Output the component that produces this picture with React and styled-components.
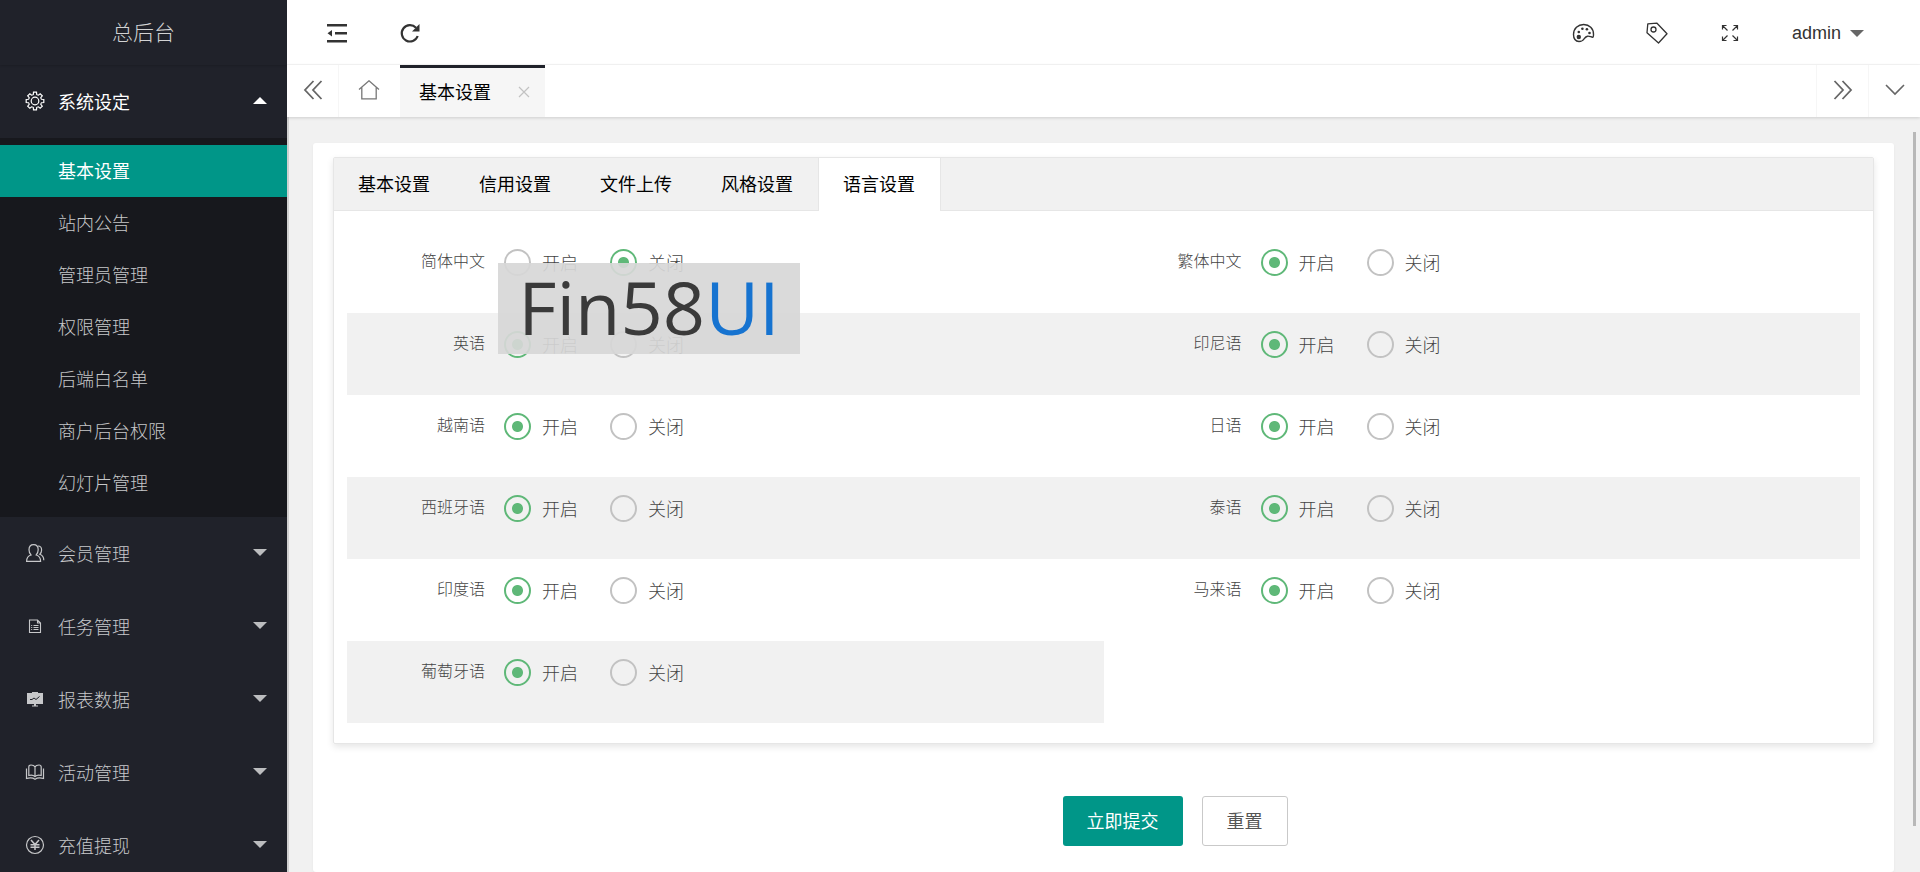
import React, { useState } from "react";
import styled, { createGlobalStyle, css } from "styled-components";

const GlobalStyle = createGlobalStyle`
  * {
    box-sizing: border-box;
  }

  body {
    margin: 0;
    background: #f1f1f1;
    font-family: "Liberation Sans", "Noto Sans CJK SC", sans-serif;
    font-size: 18px;
    font-weight: 300;
    color: #333;
  }

  button {
    font: inherit;
    cursor: pointer;
  }

  a {
    color: inherit;
    text-decoration: none;
  }
`;

const GearIcon = () => {
  const teeth = [0, 45, 90, 135, 180, 225, 270, 315];
  return (
    <svg width="20" height="20" viewBox="0 0 20 20" fill="none" stroke="currentColor" strokeWidth="1.2">
      <circle cx="10" cy="10" r="3.8" />
      {teeth.map((deg) => (
        <path
          key={deg}
          transform={`rotate(${deg} 10 10)`}
          d="M7.500 4 8.300 3.500 8.500 1.200H11.500L11.700 3.500 12.500 4"
        />
      ))}
    </svg>
  );
};

const UsersIcon = () => (
  <svg width="20" height="20" viewBox="0 0 20 20" fill="none" stroke="currentColor" strokeWidth="1.2">
    <path d="M1.6 18.4C1.6 14.6 3.2 12.8 6 12 4.6 10.6 4 9 4 6.8 4 3.6 5.8 1.6 8.6 1.6s4.6 2 4.6 5.2c0 2.2-.8 3.8-2 5.2 2.8.8 4.4 2.6 4.4 6.4Z" />
    <path d="M13 3c2.400 0 3.600 1.600 3.600 4 0 1.800-.6 3.200-1.800 4.200 2.600 1 4 2.800 4 6" />
  </svg>
);

const DocIcon = () => (
  <svg width="20" height="20" viewBox="0 0 20 20" fill="none" stroke="currentColor" strokeWidth="1.1">
    <path d="M4.500 4h8l3 3v9.500h-11ZM12.500 4v3h3" />
    <path d="M8.500 9.500h5M8.500 11.500h5M8.500 13.500h5M6.200 9.500h1M6.200 11.500h1M6.200 13.500h1" />
  </svg>
);

const BoardIcon = () => (
  <svg width="20" height="20" viewBox="0 0 20 20">
    <path fill="currentColor" d="M7 3h6v1h5v11h-7v1.500h2v1H7v-1h2V15H2V4h5Z" />
    <path fill="none" stroke="#20222a" strokeWidth="1" d="M5 10.500h2l2-1.500 2 1.500 3.500-3" />
  </svg>
);

const BookIcon = () => (
  <svg width="20" height="20" viewBox="0 0 20 20" fill="none" stroke="currentColor" strokeWidth="1.2">
    <path d="M10 4.800C9 3.200 7.500 3 6 3 4.600 3 3.800 3.800 3.800 5v8.500c2.400-.6 4.800-.2 6.200 1.200 1.400-1.400 3.800-1.800 6.200-1.200V5C16.200 3.800 15.400 3 14 3c-1.500 0-3 .2-4 1.800Zm0 0v9.900" />
    <path d="M1.500 6.500v10c2.500-.8 6.500-.7 8.500.7 2-1.400 6-1.500 8.500-.7v-10" />
  </svg>
);

const YuanIcon = () => (
  <svg width="20" height="20" viewBox="0 0 20 20" fill="none" stroke="currentColor" strokeWidth="1.2">
    <circle cx="10" cy="10" r="8.500" />
    <path strokeWidth="1.500" d="m6 5 4 4.500L14 5M10 9.500V15M5.500 9.800h9M5.500 12.300h9" />
  </svg>
);

const ShrinkIcon = () => (
  <svg width="22" height="22" viewBox="0 0 22 22" fill="currentColor">
    <path d="M1 2h20v2.500H1ZM9 10h12v2.500H9ZM1 18h20v2.500H1ZM1.500 11.200 6 8v6.500Z" />
  </svg>
);

const RefreshIcon = () => (
  <svg width="22" height="22" viewBox="0 0 22 22">
    <path d="M18.700 14A8.200 8.200 0 1 1 17 5.700" fill="none" stroke="currentColor" strokeWidth="2.200" />
    <path d="M20.500 2v7.500h-7.500Z" fill="currentColor" />
  </svg>
);

const PaletteIcon = () => (
  <svg width="24" height="22" viewBox="0 0 24 22" fill="none" stroke="currentColor" strokeWidth="1.400">
    <path d="M1.500 12.500C1.500 6.500 6 2.500 11.700 2.500S21.500 6.500 21.500 12.200c0 1.800-.2 3-.8 3-1.600 0-3.200-1.300-5.200-1-1.800.3-2.600 1.600-3.500 2.800C11 18.600 9 19.500 7 19.500 3.500 19.500 1.500 16.500 1.500 12.500Z" />
    <g fill="currentColor" stroke="none">
      <circle cx="6.800" cy="15" r="2.200" />
      <circle cx="6.800" cy="10" r="1.300" />
      <circle cx="10.400" cy="6.700" r="1.300" />
      <circle cx="14.900" cy="7.300" r="1.300" />
      <circle cx="17.500" cy="11" r="1.300" />
    </g>
  </svg>
);

const TagIcon = () => (
  <svg width="22" height="22" viewBox="0 0 22 22" fill="none" stroke="currentColor" strokeWidth="1.300" strokeLinejoin="round">
    <path d="M1.800 1.800 11 1.200 21 11.800 12.500 21 1 10.800Z" />
    <circle cx="7.500" cy="7.500" r="2.500" />
  </svg>
);

const ExpandIcon = () => (
  <svg width="18" height="18" viewBox="0 0 18 18" fill="none" stroke="currentColor" strokeWidth="1.200">
    <path d="M1.500 5.500v-4h4M1.500 1.500 6.500 6.500M12.500 1.500h4v4M16.500 1.500 11.500 6.500M1.500 12.500v4h4M1.500 16.500 6.500 11.500M16.500 12.500v4h-4M16.500 16.500 11.500 11.500" />
  </svg>
);

const DoubleLeftIcon = () => (
  <svg width="20" height="20" viewBox="0 0 20 20" fill="none" stroke="currentColor" strokeWidth="1.800">
    <path d="M10.500 1 2 10l8.500 9M18.500 1 10 10l8.500 9" />
  </svg>
);

const DoubleRightIcon = () => (
  <svg width="20" height="20" viewBox="0 0 20 20" fill="none" stroke="currentColor" strokeWidth="1.800">
    <path d="m1.500 1 8.500 9-8.500 9M9.500 1l8.500 9-8.500 9" />
  </svg>
);

const ChevronIcon = () => (
  <svg width="20" height="20" viewBox="0 0 20 20" fill="none" stroke="currentColor" strokeWidth="1.600">
    <path d="m1 5 9 9 9-9" />
  </svg>
);

const HomeIcon = () => (
  <svg width="22" height="20" viewBox="0 0 22 20" fill="none" stroke="currentColor" strokeWidth="1.300">
    <path d="M1 9.500 11 .800l10 8.700M3.800 7.500v11.300h14.400V7.500" />
  </svg>
);

const CloseIcon = () => (
  <svg width="12" height="12" viewBox="0 0 12 12" fill="none" stroke="currentColor" strokeWidth="1.200">
    <path d="m1 1 10 10M11 1 1 11" />
  </svg>
);

const subMenu = [
  "基本设置",
  "站内公告",
  "管理员管理",
  "权限管理",
  "后端白名单",
  "商户后台权限",
  "幻灯片管理",
];

const menuGroups = [
  { label: "会员管理", Icon: UsersIcon },
  { label: "任务管理", Icon: DocIcon },
  { label: "报表数据", Icon: BoardIcon },
  { label: "活动管理", Icon: BookIcon },
  { label: "充值提现", Icon: YuanIcon },
];

const formTabs = ["基本设置", "信用设置", "文件上传", "风格设置", "语言设置"];

const languages = [
  { key: "zh_cn", label: "简体中文", on: false },
  { key: "zh_tw", label: "繁体中文", on: true },
  { key: "en", label: "英语", on: true },
  { key: "id", label: "印尼语", on: true },
  { key: "vi", label: "越南语", on: true },
  { key: "ja", label: "日语", on: true },
  { key: "es", label: "西班牙语", on: true },
  { key: "th", label: "泰语", on: true },
  { key: "hi", label: "印度语", on: true },
  { key: "ms", label: "马来语", on: true },
  { key: "pt", label: "葡萄牙语", on: true },
];

const App = () => {
  const [activeTab, setActiveTab] = useState("语言设置");

  return (
    <>
      <GlobalStyle />
      <Layout>
        <Sidebar>
          <Brand>总后台</Brand>
          <MenuButton type="button" $open>
            <GearIcon />
            <MenuLabel>系统设定</MenuLabel>
            <Caret $up />
          </MenuButton>
          <SubMenu>
            {subMenu.map((item, i) => (
              <li key={item}>
                <SubLink href="#" $active={i === 0}>
                  {item}
                </SubLink>
              </li>
            ))}
          </SubMenu>
          {menuGroups.map(({ label, Icon }) => (
            <MenuButton type="button" key={label}>
              <Icon />
              <MenuLabel>{label}</MenuLabel>
              <Caret />
            </MenuButton>
          ))}
        </Sidebar>

        <Main>
          <Header>
            <HeaderGroup>
              <HeaderButton type="button" aria-label="侧边伸缩">
                <ShrinkIcon />
              </HeaderButton>
              <HeaderButton type="button" aria-label="刷新">
                <RefreshIcon />
              </HeaderButton>
            </HeaderGroup>
            <HeaderGroup>
              <HeaderButton type="button" aria-label="主题">
                <PaletteIcon />
              </HeaderButton>
              <HeaderButton type="button" aria-label="便签">
                <TagIcon />
              </HeaderButton>
              <HeaderButton type="button" aria-label="全屏">
                <ExpandIcon />
              </HeaderButton>
              <UserButton type="button">
                admin
                <Caret $dark />
              </UserButton>
            </HeaderGroup>
          </Header>

          <PageTabs>
            <TabControl type="button" aria-label="向左">
              <DoubleLeftIcon />
            </TabControl>
            <HomeTab href="#" aria-label="首页">
              <HomeIcon />
            </HomeTab>
            <PageTab>
              <a href="#">基本设置</a>
              <CloseButton type="button" aria-label="关闭">
                <CloseIcon />
              </CloseButton>
            </PageTab>
            <Spacer />
            <TabControl type="button" aria-label="向右" $right>
              <DoubleRightIcon />
            </TabControl>
            <TabControl type="button" aria-label="更多" $right>
              <ChevronIcon />
            </TabControl>
          </PageTabs>

          <Body>
            <Card>
              <form onSubmit={(e) => e.preventDefault()}>
                <TabCard>
                  <FormTabs role="tablist">
                    {formTabs.map((tab) => (
                      <FormTab
                        key={tab}
                        type="button"
                        role="tab"
                        aria-selected={tab === activeTab}
                        $active={tab === activeTab}
                        onClick={() => setActiveTab(tab)}
                      >
                        {tab}
                      </FormTab>
                    ))}
                  </FormTabs>
                  <Grid>
                    {languages.map(({ key, label, on }, i) => (
                      <Field
                        key={key}
                        role="radiogroup"
                        aria-labelledby={`${key}-label`}
                        $striped={i % 4 > 1}
                      >
                        <FieldLabel id={`${key}-label`}>{label}</FieldLabel>
                        <RadioLabel>
                          <Radio type="radio" name={key} value="1" defaultChecked={on} />
                          <span>开启</span>
                        </RadioLabel>
                        <RadioLabel>
                          <Radio type="radio" name={key} value="0" defaultChecked={!on} />
                          <span>关闭</span>
                        </RadioLabel>
                      </Field>
                    ))}
                  </Grid>
                  <Watermark>
                    Fin58<WatermarkAccent>UI</WatermarkAccent>
                  </Watermark>
                </TabCard>
                <Actions>
                  <SubmitButton type="submit">立即提交</SubmitButton>
                  <ResetButton type="reset">重置</ResetButton>
                </Actions>
              </form>
            </Card>
            <ScrollThumb />
          </Body>
        </Main>
      </Layout>
    </>
  );
};

const Layout = styled.div`
  display: flex;
  height: 100vh;
  overflow: hidden;
`;

const Sidebar = styled.nav`
  flex: 0 0 287px;
  background: #20222a;
  color: #bcbdbf;
  overflow: hidden;
  z-index: 2;
`;

const Brand = styled.div`
  height: 65px;
  line-height: 66px;
  text-align: center;
  font-size: 21px;
  color: #d2d3d4;
  box-shadow: 0 1px 2px rgba(0, 0, 0, 0.15);
`;

const MenuButton = styled.button`
  display: flex;
  align-items: center;
  width: 100%;
  height: 73px;
  padding: 0 20px 2px 25px;
  border: 0;
  background: none;
  color: ${({ $open }) => ($open ? "#fff" : "#c7c8ca")};
  font-weight: ${({ $open }) => ($open ? 400 : 300)};
  text-align: left;
`;

const MenuLabel = styled.span`
  flex: 1;
  margin-left: 13px;
`;

const Caret = styled.span`
  border: 7px solid transparent;
  ${({ $up, $dark }) =>
    $up
      ? css`
          border-top-width: 0;
          border-bottom-color: #fff;
        `
      : css`
          border-bottom-width: 0;
          border-top-color: ${$dark ? "#666" : "#bcbdbf"};
        `}
`;

const SubMenu = styled.ul`
  margin: 0;
  padding: 7px 0 8px;
  list-style: none;
  background: #17181d;
`;

const SubLink = styled.a`
  display: block;
  height: 52px;
  line-height: 54px;
  padding-left: 58px;
  color: ${({ $active }) => ($active ? "#fff" : "#c7c8ca")};
  font-weight: ${({ $active }) => ($active ? 400 : 300)};
  background: ${({ $active }) => ($active ? "#009688" : "transparent")};
`;

const Main = styled.div`
  flex: 1;
  min-width: 0;
  display: flex;
  flex-direction: column;
`;

const Header = styled.header`
  display: flex;
  justify-content: space-between;
  height: 65px;
  padding: 2px 36px 0 13px;
  background: #fff;
  border-bottom: 1px solid #f6f6f6;
`;

const HeaderGroup = styled.div`
  display: flex;
`;

const HeaderButton = styled.button`
  display: flex;
  align-items: center;
  justify-content: center;
  width: 73px;
  padding: 0;
  border: 0;
  background: none;
  color: #333;
`;

const UserButton = styled(HeaderButton)`
  gap: 9px;
  width: 118px;
  padding-left: 6px;
`;

const PageTabs = styled.div`
  display: flex;
  height: 52px;
  background: #fff;
  box-shadow: 0 1px 3px rgba(0, 0, 0, 0.15);
  z-index: 1;
`;

const TabControl = styled.button`
  display: flex;
  align-items: center;
  justify-content: center;
  width: 52px;
  padding: 0 0 2px;
  border: 0 solid #f6f6f6;
  border-width: ${({ $right }) => ($right ? "0 0 0 1px" : "0 1px 0 0")};
  background: none;
  color: #666;
`;

const HomeTab = styled.a`
  display: flex;
  align-items: center;
  justify-content: center;
  width: 61px;
  padding: 0 1px 2px 0;
  color: #777;
`;

const PageTab = styled.div`
  display: flex;
  align-items: center;
  gap: 27px;
  padding: 0 15px 4px 19px;
  border-top: 3px solid #20222a;
  background: #f6f6f6;
  color: #000;
  font-weight: 400;
`;

const CloseButton = styled.button`
  display: flex;
  padding: 2px 0 0;
  border: 0;
  background: none;
  color: #c2c2c2;
`;

const Spacer = styled.div`
  flex: 1;
`;

const Body = styled.main`
  position: relative;
  flex: 1;
  min-height: 0;
  padding: 26px 26px 0 24px;
  border-left: 2px solid #d0d0d0;
  background: #f1f1f1;
  overflow: hidden;
`;

const Card = styled.section`
  min-height: 100%;
  padding: 14px 20px;
  border-radius: 3px;
  background: #fff;
  box-shadow: 0 1px 3px rgba(0, 0, 0, 0.05);
`;

const TabCard = styled.div`
  position: relative;
  border: 1px solid #e6e6e6;
  border-radius: 2px;
  box-shadow: 0 3px 7px rgba(0, 0, 0, 0.1);
`;

const FormTabs = styled.div`
  display: flex;
  height: 53px;
  border-bottom: 1px solid #e6e6e6;
  background: #f1f1f1;
`;

const FormTab = styled.button`
  min-width: 121px;
  height: 53px;
  padding: 0 1px 4px 0;
  border: 0;
  background: none;
  color: #000;
  font-weight: 400;

  ${({ $active }) =>
    $active &&
    css`
      min-width: 123px;
      border: 1px solid #e6e6e6;
      border-width: 0 1px;
      background: #fff;
    `}
`;

const Grid = styled.div`
  display: grid;
  grid-template-columns: 1fr 1fr;
  padding: 20px 13px;
`;

const Field = styled.div`
  display: flex;
  align-items: flex-start;
  height: 82px;
  padding-top: 13px;
  background: ${({ $striped }) => ($striped ? "#f1f1f1" : "transparent")};
`;

const FieldLabel = styled.span`
  width: 138px;
  margin-right: 19px;
  line-height: 36px;
  text-align: right;
  font-size: 16px;
  color: #444;
`;

const RadioLabel = styled.label`
  display: flex;
  align-items: center;
  gap: 11px;
  height: 36px;
  margin-right: 32px;
  color: #444;
`;

const Radio = styled.input`
  appearance: none;
  width: 27px;
  height: 27px;
  margin: 0;
  border: 2px solid #c2c2c2;
  border-radius: 50%;

  &:checked {
    border-color: #5fb878;
    background: radial-gradient(circle, #5fb878 5px, transparent 6px);
  }
`;

const Watermark = styled.div`
  position: absolute;
  top: 105px;
  left: 164px;
  width: 302px;
  height: 91px;
  line-height: 88px;
  text-align: center;
  font-family: "Open Sans", sans-serif;
  font-size: 74px;
  font-weight: 500;
  color: #3a3a3a;
  background: rgba(215, 215, 215, 0.92);
`;

const WatermarkAccent = styled.span`
  color: #1673d0;
`;

const Actions = styled.div`
  display: flex;
  justify-content: center;
  gap: 19px;
  margin: 52px 0 0 143px;
`;

const SubmitButton = styled.button`
  height: 50px;
  padding: 0 24px 2px;
  border: 0;
  border-radius: 3px;
  background: #009688;
  color: #fff;
  font-weight: 400;
`;

const ResetButton = styled(SubmitButton)`
  border: 1px solid #c9c9c9;
  background: #fff;
  color: #555;
`;

const ScrollThumb = styled.div`
  position: absolute;
  top: 15px;
  right: 4px;
  bottom: 46px;
  width: 3px;
  background: #b8b8b8;
`;

export default App;
